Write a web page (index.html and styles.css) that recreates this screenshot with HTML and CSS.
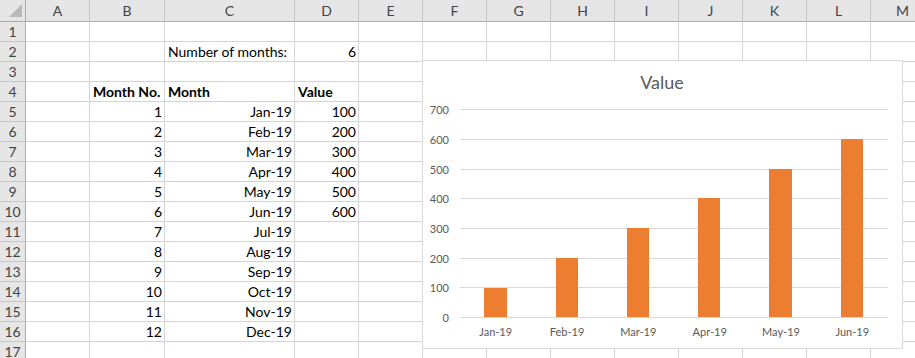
FILE: index.html
```html
<!DOCTYPE html>
<html lang="en">

<head>
  <meta charset="UTF-8" />
  <title>Number of months</title>
  <link rel="stylesheet" href="styles.css">
</head>

<body>
  <div class="sheet">
    <div class="row head"><div class="corner"><span class="tri"></span></div><div>A</div><div>B</div><div>C</div><div>D</div><div>E</div><div>F</div><div>G</div><div>H</div><div>I</div><div>J</div><div>K</div><div>L</div><div>M</div></div>
    <div class="row"><div class="rh">1</div><div></div><div></div><div></div><div></div><div></div><div></div><div></div><div></div><div></div><div></div><div></div><div></div><div></div></div>
    <div class="row"><div class="rh">2</div><div></div><div></div><div>Number of months:</div><div class="num">6</div><div></div><div></div><div></div><div></div><div></div><div></div><div></div><div></div><div></div></div>
    <div class="row"><div class="rh">3</div><div></div><div></div><div></div><div></div><div></div><div></div><div></div><div></div><div></div><div></div><div></div><div></div><div></div></div>
    <div class="row"><div class="rh">4</div><div></div><div class="b">Month No.</div><div class="b">Month</div><div class="b">Value</div><div></div><div></div><div></div><div></div><div></div><div></div><div></div><div></div><div></div></div>
    <div class="row"><div class="rh">5</div><div></div><div class="num">1</div><div class="num">Jan-19</div><div class="num">100</div><div></div><div></div><div></div><div></div><div></div><div></div><div></div><div></div><div></div></div>
    <div class="row"><div class="rh">6</div><div></div><div class="num">2</div><div class="num">Feb-19</div><div class="num">200</div><div></div><div></div><div></div><div></div><div></div><div></div><div></div><div></div><div></div></div>
    <div class="row"><div class="rh">7</div><div></div><div class="num">3</div><div class="num">Mar-19</div><div class="num">300</div><div></div><div></div><div></div><div></div><div></div><div></div><div></div><div></div><div></div></div>
    <div class="row"><div class="rh">8</div><div></div><div class="num">4</div><div class="num">Apr-19</div><div class="num">400</div><div></div><div></div><div></div><div></div><div></div><div></div><div></div><div></div><div></div></div>
    <div class="row"><div class="rh">9</div><div></div><div class="num">5</div><div class="num">May-19</div><div class="num">500</div><div></div><div></div><div></div><div></div><div></div><div></div><div></div><div></div><div></div></div>
    <div class="row"><div class="rh">10</div><div></div><div class="num">6</div><div class="num">Jun-19</div><div class="num">600</div><div></div><div></div><div></div><div></div><div></div><div></div><div></div><div></div><div></div></div>
    <div class="row"><div class="rh">11</div><div></div><div class="num">7</div><div class="num">Jul-19</div><div></div><div></div><div></div><div></div><div></div><div></div><div></div><div></div><div></div><div></div></div>
    <div class="row"><div class="rh">12</div><div></div><div class="num">8</div><div class="num">Aug-19</div><div></div><div></div><div></div><div></div><div></div><div></div><div></div><div></div><div></div><div></div></div>
    <div class="row"><div class="rh">13</div><div></div><div class="num">9</div><div class="num">Sep-19</div><div></div><div></div><div></div><div></div><div></div><div></div><div></div><div></div><div></div><div></div></div>
    <div class="row"><div class="rh">14</div><div></div><div class="num">10</div><div class="num">Oct-19</div><div></div><div></div><div></div><div></div><div></div><div></div><div></div><div></div><div></div><div></div></div>
    <div class="row"><div class="rh">15</div><div></div><div class="num">11</div><div class="num">Nov-19</div><div></div><div></div><div></div><div></div><div></div><div></div><div></div><div></div><div></div><div></div></div>
    <div class="row"><div class="rh">16</div><div></div><div class="num">12</div><div class="num">Dec-19</div><div></div><div></div><div></div><div></div><div></div><div></div><div></div><div></div><div></div><div></div></div>
    <div class="row"><div class="rh">17</div><div></div><div></div><div></div><div></div><div></div><div></div><div></div><div></div><div></div><div></div><div></div><div></div><div></div></div>

    <!-- floating chart object -->
    <div class="chart">
      <svg width="481" height="289" viewBox="0 0 481 289">
        <rect x="0.5" y="0.5" width="480" height="288" fill="#fff" stroke="#d9d9d9" />
        <text class="title" x="240" y="29" text-anchor="middle">Value</text>
        <g stroke="#d9d9d9" stroke-width="1">
          <line x1="38" x2="466" y1="49.5" y2="49.5" />
          <line x1="38" x2="466" y1="79.5" y2="79.5" />
          <line x1="38" x2="466" y1="109.5" y2="109.5" />
          <line x1="38" x2="466" y1="138.5" y2="138.5" />
          <line x1="38" x2="466" y1="168.5" y2="168.5" />
          <line x1="38" x2="466" y1="198.5" y2="198.5" />
          <line x1="38" x2="466" y1="227.5" y2="227.5" />
        </g>
        <g class="ylab" text-anchor="end">
          <text x="27" y="53.5">700</text>
          <text x="27" y="83.5">600</text>
          <text x="27" y="113.5">500</text>
          <text x="27" y="142.5">400</text>
          <text x="27" y="172.5">300</text>
          <text x="27" y="202.5">200</text>
          <text x="27" y="231.5">100</text>
          <text x="27" y="261.5">0</text>
        </g>
        <g fill="#ed7d31">
          <rect x="62" y="228" width="23" height="29" />
          <rect x="134" y="198" width="22" height="59" />
          <rect x="205" y="168" width="22" height="89" />
          <rect x="276" y="138" width="22" height="119" />
          <rect x="347" y="109" width="23" height="148" />
          <rect x="419" y="79" width="22" height="178" />
        </g>
        <line x1="38" x2="466" y1="257.5" y2="257.5" stroke="#d9d9d9" />
        <g class="xlab" text-anchor="middle">
          <text x="73.7" y="276">Jan-19</text>
          <text x="145" y="276">Feb-19</text>
          <text x="216.3" y="276">Mar-19</text>
          <text x="287.7" y="276">Apr-19</text>
          <text x="359" y="276">May-19</text>
          <text x="430.3" y="276">Jun-19</text>
        </g>
      </svg>
    </div>
  </div>
</body>

</html>
```

FILE: styles.css
```css
:root {
  --grid: #d4d4d4;
  --head-bg: #e6e6e6;
  --head-line: #c6c6c6;
  --text: #000;
  --chart-text: #595959;
}

* {
  margin: 0;
  padding: 0;
  box-sizing: border-box;
}

body {
  width: 915px;
  height: 358px;
  overflow: hidden;
  background: #fff;
  font-family: 'Lato', 'Liberation Sans', sans-serif;
  color: var(--text);
}

.sheet {
  position: relative;
  width: 935px;
}

.row {
  display: grid;
  grid-template-columns: 26px 64px 75px 130px 64px 64px repeat(7, 64px) 64px;
  height: 20px;
}

.row > div {
  border-right: 1px solid var(--grid);
  border-bottom: 1px solid var(--grid);
  font-size: 14px;
  line-height: 19px;
  padding: 0 3px;
  white-space: nowrap;
  overflow: visible;
}

.row > .num {
  text-align: right;
  padding: 0 2px 0 0;
}

.row > .b {
  font-weight: 700;
}

.row > .rh {
  background: var(--head-bg);
  border-right: 1px solid #ababab;
  border-bottom: 1px solid var(--head-line);
  text-align: center;
  color: #444;
  padding: 0;
}

.head {
  height: 22px;
}

.head > div {
  background: var(--head-bg);
  border-right: 1px solid var(--head-line);
  border-bottom: 1px solid #ababab;
  text-align: center;
  color: #444;
  line-height: 21px;
}

.head > .corner {
  position: relative;
  border-right: 1px solid #ababab;
}

.tri {
  position: absolute;
  right: 3px;
  bottom: 4px;
  width: 0;
  height: 0;
  border-left: 13px solid transparent;
  border-bottom: 13px solid #b9b9b9;
}

.chart {
  position: absolute;
  left: 422px;
  top: 60px;
  width: 481px;
  height: 289px;
}

.chart svg {
  display: block;
  font-family: 'Lato', 'Liberation Sans', sans-serif;
}

.chart .title {
  font-size: 18px;
  fill: var(--chart-text);
}

.chart .ylab text,
.chart .xlab text {
  font-size: 11px;
  fill: var(--chart-text);
}
```
